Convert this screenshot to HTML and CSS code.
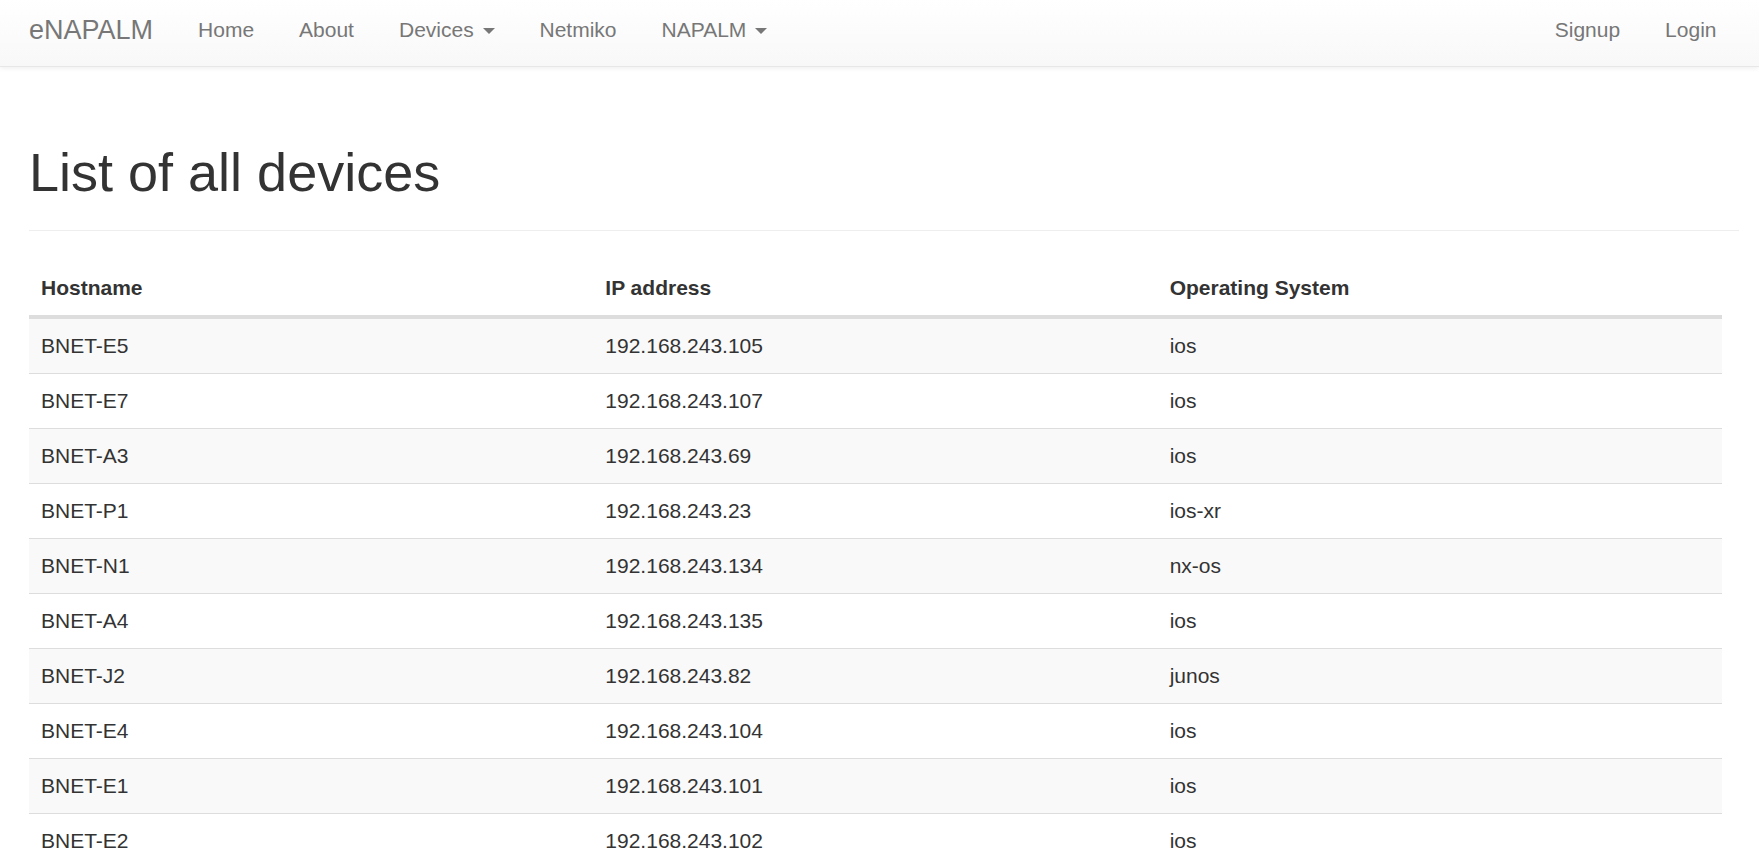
FILE: index.html
```html
<!DOCTYPE html>
<html lang="en">
<head>
<meta charset="utf-8">
<title>eNAPALM - Devices</title>
<link rel="stylesheet" href="styles.css">
</head>
<body>
<nav class="navbar">
  <div class="navbar-inner">
    <a class="brand" href="#">eNAPALM</a>
    <ul class="nav">
      <li><a href="#">Home</a></li>
      <li><a href="#">About</a></li>
      <li><a href="#">Devices <span class="caret"></span></a></li>
      <li><a href="#">Netmiko</a></li>
      <li><a href="#">NAPALM <span class="caret"></span></a></li>
    </ul>
    <ul class="nav nav-right">
      <li><a href="#">Signup</a></li>
      <li><a href="#">Login</a></li>
    </ul>
  </div>
</nav>
<main class="container">
  <div class="page-header">
    <h1>List of all devices</h1>
  </div>
  <table class="table">
    <thead>
      <tr><th>Hostname</th><th>IP address</th><th>Operating System</th></tr>
    </thead>
    <tbody>
      <tr><td>BNET-E5</td><td>192.168.243.105</td><td>ios</td></tr>
      <tr><td>BNET-E7</td><td>192.168.243.107</td><td>ios</td></tr>
      <tr><td>BNET-A3</td><td>192.168.243.69</td><td>ios</td></tr>
      <tr><td>BNET-P1</td><td>192.168.243.23</td><td>ios-xr</td></tr>
      <tr><td>BNET-N1</td><td>192.168.243.134</td><td>nx-os</td></tr>
      <tr><td>BNET-A4</td><td>192.168.243.135</td><td>ios</td></tr>
      <tr><td>BNET-J2</td><td>192.168.243.82</td><td>junos</td></tr>
      <tr><td>BNET-E4</td><td>192.168.243.104</td><td>ios</td></tr>
      <tr><td>BNET-E1</td><td>192.168.243.101</td><td>ios</td></tr>
      <tr><td>BNET-E2</td><td>192.168.243.102</td><td>ios</td></tr>
    </tbody>
  </table>
</main>
</body>
</html>
```
FILE: styles.css
```css
html, body {
  margin: 0;
  padding: 0;
}
body {
  font-family: "Liberation Sans", Arial, sans-serif;
  font-size: 21px;
  line-height: 30px;
  color: #333;
  background: #fff;
}
a {
  text-decoration: none;
}
.navbar {
  height: 66px;
  border-bottom: 1px solid #e7e7e7;
  background-image: linear-gradient(to bottom, #ffffff 0%, #f8f8f8 100%);
  box-shadow: inset 0 1px 0 rgba(255,255,255,.15), 0 1px 5px rgba(0,0,0,.075);
}
.navbar-inner {
  display: flex;
  align-items: flex-start;
  padding: 0 20px 0 29px;
}
.brand {
  font-size: 27px;
  line-height: 30px;
  padding: 15px 22.5px 15px 0;
  color: #777;
}
.nav {
  display: flex;
  list-style: none;
  margin: 0;
  padding: 0;
}
.nav-right {
  margin-left: auto;
}
.nav a {
  display: block;
  padding: 15px 22.5px;
  line-height: 30px;
  color: #777;
}
.caret {
  display: inline-block;
  width: 0;
  height: 0;
  margin-left: 3px;
  vertical-align: middle;
  border-top: 6px solid #777;
  border-left: 6px solid transparent;
  border-right: 6px solid transparent;
}
.container {
  padding: 75px 20px 0 29px;
}
.page-header {
  padding-bottom: 28px;
  margin-bottom: 30px;
  border-bottom: 1px solid #eee;
}
.page-header h1 {
  margin: 0;
  font-size: 54px;
  line-height: 60px;
  font-weight: normal;
  color: #333;
}
.table {
  width: calc(100% - 17px);
  border-collapse: collapse;
  border-spacing: 0;
  table-layout: fixed;
  margin: 0;
}
.table th,
.table td {
  width: 33.333%;
  padding: 12px;
  line-height: 30px;
  text-align: left;
  vertical-align: top;
}
.table th {
  font-weight: bold;
  border-bottom: 4px solid #ddd;
  vertical-align: bottom;
}
.table td {
  border-top: 1px solid #ddd;
}
.table tbody tr:first-child td {
  border-top: 0;
}
.table tbody tr:nth-child(odd) {
  background-color: #f9f9f9;
}
```
